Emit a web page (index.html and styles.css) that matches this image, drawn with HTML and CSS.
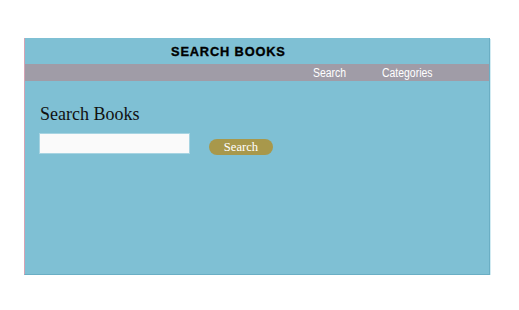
FILE: index.html
```html
<!DOCTYPE html>
<html>
<head>
<meta charset="utf-8">
<link rel="stylesheet" href="styles.css">
</head>
<body>
<div class="panel">
  <header class="top">
    <h1 class="brand">SEARCH BOOKS</h1>
  </header>
  <nav class="nav">
    <a class="nav-link" href="#">Search</a>
    <a class="nav-link" href="#">Categories</a>
  </nav>
  <main class="main">
    <h2 class="title">Search Books</h2>
    <form class="form">
      <input class="field" type="text">
      <button class="btn" type="button">Search</button>
    </form>
  </main>
</div>
</body>
</html>
```
FILE: styles.css
```css
html, body {
  margin: 0;
  padding: 0;
  background: #ffffff;
}
body {
  padding: 38px 0 0 24px;
  font-family: "Liberation Serif", serif;
}
.panel {
  box-sizing: border-box;
  width: 466px;
  height: 237px;
  background: #7fc0d4;
  border-left: 1px solid #d6a3b4;
  border-right: 1px solid #6aaec4;
  border-bottom: 1px solid #6aaec4;
  box-shadow: 1px 1px 0 #d2ebf2;
  display: flex;
  flex-direction: column;
}
.top {
  box-sizing: border-box;
  height: 26px;
  display: flex;
  align-items: center;
  padding: 3px 0 0 146px;
}
.brand {
  margin: 0;
  font-family: "Liberation Sans", Arial, sans-serif;
  font-weight: 900;
  font-size: 12.8px;
  letter-spacing: 0.85px;
  color: #000;
  -webkit-text-stroke: 0.35px #000;
  line-height: 1;
}
.nav {
  height: 17px;
  background: #a09ca7;
  display: flex;
  justify-content: flex-end;
  align-items: center;
  gap: 31px;
  padding-right: 49px;
}
.nav-link {
  display: inline-block;
  font-family: "Liberation Sans", Arial, sans-serif;
  font-size: 12px;
  color: #ffffff;
  text-decoration: none;
  line-height: 1;
  transform: scaleX(0.87);
  transform-origin: left center;
}
.main {
  padding: 23px 0 0 14px;
}
.title {
  margin: 0 0 9px 0;
  padding-left: 1px;
  font-family: "Liberation Serif", serif;
  font-weight: normal;
  font-size: 18px;
  line-height: 20px;
  color: #111;
}
.form {
  margin: 0;
  display: flex;
  align-items: flex-start;
  gap: 19px;
}
.field {
  box-sizing: border-box;
  width: 151px;
  height: 21px;
  margin: 0;
  padding: 0 4px;
  background: #fafafa;
  border: 1px solid #a7d4e2;
}
.btn {
  box-sizing: border-box;
  width: 64px;
  height: 16px;
  margin: 6px 0 0 0;
  padding: 0;
  border: none;
  border-radius: 8px;
  background: #a8984b;
  color: #ffffff;
  font-family: "Liberation Serif", serif;
  font-size: 12.6px;
  line-height: 16px;
}
```
